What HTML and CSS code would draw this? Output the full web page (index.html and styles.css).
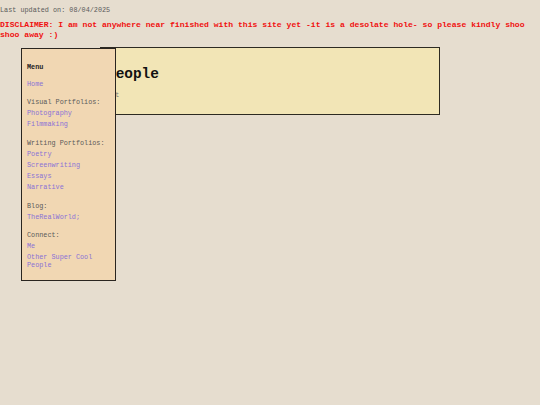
FILE: index.html
```html
<!DOCTYPE html>
<html lang="en">
<head>
<meta charset="utf-8">
<title>Other Super Cool People</title>
<link rel="stylesheet" href="styles.css">
</head>
<body>
<p class="updated">Last updated on: 08/04/2025</p>
<p class="disclaimer">DISCLAIMER: I am not anywhere near finished with this site yet -it is a desolate hole- so please kindly shoo shoo away :)</p>
<main class="header">
  <h1 class="title">People</h1>
  <p class="sub">Art</p>
</main>
<nav class="menu">
  <div class="menu-title">Menu</div>
  <div class="group">
    <a href="#">Home</a>
  </div>
  <div class="group">
    <span class="label">Visual Portfolios:</span>
    <a href="#">Photography</a>
    <a href="#">Filmmaking</a>
  </div>
  <div class="group">
    <span class="label">Writing Portfolios:</span>
    <a href="#">Poetry</a>
    <a href="#">Screenwriting</a>
    <a href="#">Essays</a>
    <a href="#">Narrative</a>
  </div>
  <div class="group">
    <span class="label">Blog:</span>
    <a href="#">TheRealWorld;</a>
  </div>
  <div class="group">
    <span class="label">Connect:</span>
    <a href="#">Me</a>
    <a href="#">Other Super Cool People</a>
  </div>
</nav>
</body>
</html>
```
FILE: styles.css
```css
html, body {
  margin: 0;
  padding: 0;
}
body {
  background: #e6ddcf;
  font-family: "Liberation Mono", "Courier New", monospace;
  color: #555;
  position: relative;
  min-height: 405px;
}
.updated {
  margin: 6px 0 0;
  font-size: 6.8px;
  line-height: 8px;
  color: #5a5a5a;
}
.disclaimer {
  margin: 6px 0 0;
  font-size: 8.1px;
  line-height: 10px;
  font-weight: bold;
  color: #f01010;
}
.header {
  margin: 7px 0 0 100px;
  width: 332px;
  height: 66px;
  background: #f2e5b6;
  border: 1.5px solid #2d2a22;
  padding: 0 0 0 6px;
  box-sizing: content-box;
  display: flex;
  flex-direction: column;
}
.title {
  margin: 18px 0 0;
  font-size: 14.4px;
  line-height: 16px;
  font-weight: bold;
  color: #111;
}
.sub {
  margin: 9px 0 0;
  font-size: 6.8px;
  line-height: 8px;
  color: #777;
}
.menu {
  position: absolute;
  left: 21px;
  top: 48px;
  width: 83px;
  height: 217px;
  padding: 14px 5px 0 5px;
  background: #f1d7b3;
  border: 1.5px solid #2a2520;
  display: flex;
  flex-direction: column;
  gap: 10.7px;
  font-size: 6.8px;
  line-height: 8px;
}
.menu-title {
  font-weight: bold;
  color: #222;
  margin-bottom: -2.2px;
}
.group {
  display: flex;
  flex-direction: column;
  gap: 3px;
}
.label {
  color: #5a5a5a;
}
.menu a {
  color: #8a72d6;
  text-decoration: none;
}
```
